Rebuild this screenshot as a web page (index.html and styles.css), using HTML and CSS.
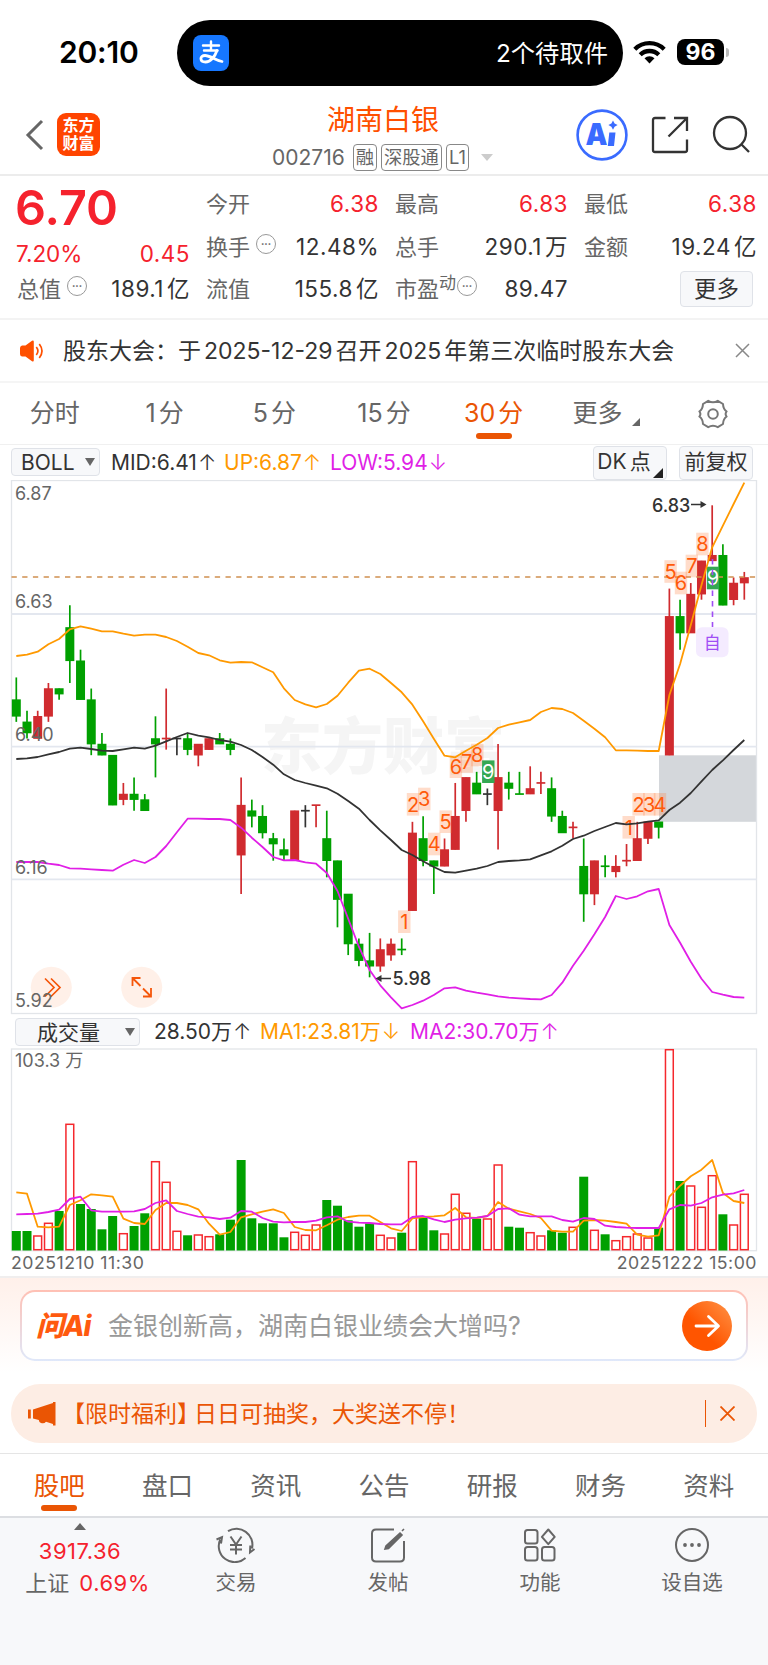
FILE: index.html
```html
<!DOCTYPE html>
<html lang="zh-CN">
<head>
  <meta charset="UTF-8">
  <meta name="viewport" content="width=device-width, initial-scale=1.0">
  <title>湖南白银 002716</title>
  <link rel="stylesheet" href="styles.css">
</head>
<body>

<div class="status-bar">
  <span class="clock">20:10</span>
  <div class="island">
    <svg class="alipay" width="36" height="36" viewBox="0 0 36 36">
      <rect width="36" height="36" rx="8" fill="#1677ff"/>
      <g fill="none" stroke="#fff" stroke-width="2.4" stroke-linecap="round">
        <path d="M10 10.5h16M18 6.500v9M11 15.500h13.500"/>
        <path d="M24 15.500c-2 6-6.500 11.500-11.500 11.500-6 0-6-6.500-.5-6.500 5 0 10 4.500 17 6" stroke-width="2.800"/>
      </g>
    </svg>
    <span>2个待取件</span>
  </div>
  <svg class="wifi" width="33" height="24" viewBox="0 0 33 24">
    <g fill="none" stroke="#000" stroke-width="4.300">
      <path d="M1.800 9.200a21 21 0 0 1 29.400 0"/>
      <path d="M7.200 14.800a13.300 13.300 0 0 1 18.600 0"/>
    </g>
    <path d="M16.500 23.500l-5-5.300a7.300 7.300 0 0 1 10 0z"/>
  </svg>
  <span class="battery">96</span>
  <span class="battery-tip"></span>
</div>

<header class="header">
  <svg class="back" width="20" height="32" viewBox="0 0 20 32"><path d="M17 2L3 16l14 14" fill="none" stroke="#666" stroke-width="3"/></svg>
  <div class="logo">东方<br>财富</div>
  <div class="title">
    <h1>湖南白银</h1>
    <div class="code">002716 <i>融</i><i>深股通</i><i>L1</i><b></b></div>
  </div>
  <svg class="ai" width="52" height="52" viewBox="0 0 52 52">
    <circle cx="26" cy="26" r="24.400" fill="#fff" stroke="#3a6bff" stroke-width="2.600"/>
    <text x="9.500" y="36" textLength="22" lengthAdjust="spacingAndGlyphs">A</text>
    <path d="M33.300 23.500h6.200l-1.500 13.500h-6.200zM37 11.500l1.600 3 3 1.600-3 1.600-1.600 3-1.600-3-3-1.600 3-1.600z" fill="#3a6bff"/>
  </svg>
  <svg class="share" width="38" height="38" viewBox="0 0 38 38">
    <path d="M14.500 2H4Q2 2 2 4v30q0 2 2 2h30q2 0 2-2V23.500M23 2h13v13M36 2L17.500 20.500" fill="none" stroke="#333" stroke-width="2.300"/>
  </svg>
  <svg class="search" width="38" height="38" viewBox="0 0 38 38">
    <g fill="none" stroke="#333" stroke-width="2.300"><circle cx="18" cy="18" r="16"/><path d="M29 29l8 8"/></g>
  </svg>
</header>

<section class="quote">
  <div class="col first">
    <div class="price">6.70</div>
    <div class="row change"><em>7.20%</em><em>0.45</em></div>
    <div class="row"><span>总值<u>•••</u></span><strong>189.1<s></s>亿</strong></div>
  </div>
  <div class="col">
    <div class="row"><span>今开</span><em>6.38</em></div>
    <div class="row"><span>换手<u>•••</u></span><strong>12.48%</strong></div>
    <div class="row"><span>流值</span><strong>155.8<s></s>亿</strong></div>
  </div>
  <div class="col">
    <div class="row"><span>最高</span><em>6.83</em></div>
    <div class="row"><span>总手</span><strong>290.1<s></s>万</strong></div>
    <div class="row"><span>市盈<sup>动</sup><u>•••</u></span><strong>89.47</strong></div>
  </div>
  <div class="col">
    <div class="row"><span>最低</span><em>6.38</em></div>
    <div class="row"><span>金额</span><strong>19.24<s></s>亿</strong></div>
    <div class="row end"><button class="more">更多</button></div>
  </div>
</section>

<div class="notice">
  <svg width="24" height="22" viewBox="0 0 24 22">
    <path d="M0 8q0-2 2-2.500h3.500L12 .8q1.800-.8 1.800 1v18.400q0 1.800-1.800 1L5.500 16.500H2q-2-.5-2-2.500z" fill="#ff5000"/>
    <path d="M16.300 7q3.200 4 0 8M19.300 4q5.400 7 0 14" fill="none" stroke="#ff5000" stroke-width="1.700"/>
  </svg>
  <p>股东大会：于<s></s>2025-12-29<s></s>召开<s></s>2025<s></s>年第三次临时股东大会</p>
  <svg width="15" height="15" viewBox="0 0 15 15"><path d="M1 1l13 13M14 1L1 14" stroke="#888" stroke-width="1.500"/></svg>
</div>

<nav class="periods">
  <a>分时</a>
  <a>1<s></s>分</a>
  <a>5<s></s>分</a>
  <a>15<s></s>分</a>
  <a class="active">30<s></s>分</a>
  <a class="has-more">更多</a>
  <a class="gear">
    <svg width="30" height="30" viewBox="0 0 30 30" fill="none" stroke="#777" stroke-width="2" stroke-linejoin="round">
      <path d="M10.200 1.800q4.800 3 9.600 0L25 5q.2 5 3.600 7.500-2 2.500 0 5Q25.200 20 25 25l-5.200 3.200q-4.800-3-9.600 0L5 25q-.2-5-3.600-7.500 2-2.500 0-5Q4.800 10 5 5z"/>
      <circle cx="15" cy="15" r="4.800"/>
    </svg>
  </a>
</nav>

<div class="indicator">
  <button class="select boll">BOLL<b></b></button>
  <span class="mid">MID:6.41<i>↑</i></span>
  <span class="up">UP:6.87<i>↑</i></span>
  <span class="low">LOW:5.94<i>↓</i></span>
  <button class="dk">DK<s></s>点<b></b></button>
  <button class="adj">前复权</button>
</div>

<svg id="kline" width="768" height="535" viewBox="0 480 768 535"></svg>

<div class="indicator volume-bar">
  <button class="select vol">成交量<b></b></button>
  <span class="mid">28.50万<i>↑</i></span>
  <span class="up">MA1:23.81万<i>↓</i></span>
  <span class="low">MA2:30.70万<i>↑</i></span>
</div>

<svg id="volume" width="768" height="204" viewBox="0 1048 768 204"></svg>

<div class="dates"><span>20251210 11:30</span><span>20251222 15:00</span></div>

<section class="ask">
  <div class="ask-box">
    <span class="ask-logo">问Ai</span>
    <span class="ask-text">金银创新高，湖南白银业绩会大增吗?</span>
    <svg width="50" height="50" viewBox="0 0 50 50">
      <defs><linearGradient id="go" x1="1" y1="0" x2="0" y2="1"><stop offset=".1" stop-color="#ff8a3c"/><stop offset=".6" stop-color="#ff5500"/></linearGradient></defs>
      <circle cx="25" cy="25" r="25" fill="url(#go)"/>
      <path d="M14 25h22M26.500 15.500L36.500 25l-10 9.500" fill="none" stroke="#fff" stroke-width="2.800" stroke-linecap="round" stroke-linejoin="round"/>
    </svg>
  </div>
</section>

<div class="banner">
  <svg width="28" height="24" viewBox="0 0 28 24" fill="#ea5504"><path d="M0 7.500h2.800v9H0zM5 7.500L25 1V0h2.500v23.500H25V22l-7-2.300q-2 2.500-5 1.200-2-.6-2.200-3L5 16.500z"/></svg>
  <p>【限时福利<i>】</i>日日可抽奖，大奖送不停！</p>
  <svg class="close" width="15" height="15" viewBox="0 0 15 15"><path d="M.5.5l14 14M14.500.5l-14 14" stroke="#ea5504" stroke-width="1.800"/></svg>
</div>

<nav class="sections">
  <a class="active">股吧</a>
  <a>盘口</a>
  <a>资讯</a>
  <a>公告</a>
  <a>研报</a>
  <a>财务</a>
  <a>资料</a>
</nav>

<footer class="toolbar">
  <div class="index">
    <b></b>
    <em>3917.36</em>
    <div>上证 <em>0.69%</em></div>
  </div>
  <div class="tool">
    <svg width="42" height="36" viewBox="0 0 42 36" fill="none" stroke="#666" stroke-width="2">
      <path d="M13 4.200A16 16 0 0 1 37 21.500M39.500 22l-4.500 3.500.3-7M30.500 31A16 16 0 0 1 5.200 12.500M1.500 12.500l5.500-2.300-1 6.300"/>
      <path d="M15.500 9.500l5.500 8 5.500-8M21 17.500v10M15 18h12M15 22.500h12"/>
    </svg>
    <span>交易</span>
  </div>
  <div class="tool">
    <svg width="36" height="36" viewBox="0 0 36 36" fill="none" stroke="#666" stroke-width="2">
      <path d="M24 2.500H6Q2 2.500 2 6.500v24q0 4 4 4h24q4 0 4-4V14"/>
      <path d="M15 22l1-3L30 6l2 2-13.500 13.500zM32 4l2-2" fill="#666" stroke-width="1.600"/>
    </svg>
    <span>发帖</span>
  </div>
  <div class="tool">
    <svg width="36" height="36" viewBox="0 0 36 36" fill="none" stroke="#666" stroke-width="2">
      <rect x="3" y="3" width="12.500" height="13.500" rx="2.500"/>
      <rect x="3" y="20" width="12.500" height="13.500" rx="2.500"/>
      <rect x="20" y="20" width="12.500" height="13.500" rx="2.500"/>
      <path d="M26.300 2.500l6.400 7.300-6.400 7.300-6.400-7.300z" stroke-linejoin="round"/>
    </svg>
    <span>功能</span>
  </div>
  <div class="tool">
    <svg width="36" height="36" viewBox="0 0 36 36" fill="none" stroke="#666" stroke-width="2">
      <circle cx="18" cy="18" r="16"/>
      <g fill="#666" stroke="none"><circle cx="11" cy="18" r="1.900"/><circle cx="18" cy="18" r="1.900"/><circle cx="25" cy="18" r="1.900"/></g>
    </svg>
    <span>设自选</span>
  </div>
</footer>

<script src="chart.js"></script>
</body>
</html>
```
FILE: styles.css
```css
* {
  box-sizing: border-box;
}
body {
  margin: 0;
  width: 768px;
  height: 1665px;
  background: #fff;
  color: #333;
  font-family: Inter, "Noto Sans CJK SC", sans-serif;
  overflow: hidden;
}
i, em, u, s {
  font-style: normal;
  text-decoration: none;
}
s {
  display: inline-block;
  width: 3px;
}
p, h1 {
  margin: 0;
  font-weight: 400;
}
svg {
  display: block;
  flex: none;
}
button {
  font-family: inherit;
  color: #333;
  padding: 0;
  background: #f7f8fa;
  border: 1.500px solid #dfe2e8;
  border-radius: 4px;
}

/* status bar */
.status-bar {
  height: 90px;
  padding-top: 20px;
  display: flex;
}
.clock {
  width: 177px;
  padding-left: 59px;
  font-size: 30px;
  font-weight: 600;
  line-height: 65px;
  letter-spacing: -0.200px;
  color: #000;
}
.island {
  width: 446px;
  height: 66px;
  padding: 0 15px 0 16px;
  border-radius: 33px;
  background: #000;
  color: #fff;
  display: flex;
  align-items: center;
  justify-content: space-between;
  font-size: 24.300px;
}
.island span {
  padding-bottom: 3px;
}
.wifi {
  margin: 20px 0 0 10px;
}
.battery {
  width: 47px;
  height: 26px;
  margin: 19px 2px 0 11px;
  border-radius: 8px;
  background: #000;
  color: #fff;
  font-size: 23px;
  font-weight: 700;
  line-height: 26px;
  text-align: center;
}
.battery-tip {
  width: 3px;
  height: 9px;
  margin-top: 28px;
  border-radius: 0 4px 4px 0;
  background: #bbb;
}

/* header */
.header {
  height: 86px;
  padding-left: 25px;
  border-bottom: 2px solid #ececec;
  display: flex;
}
.back {
  margin-top: 29px;
}
.logo {
  width: 43px;
  height: 43px;
  margin: 23px 0 0 12px;
  padding-top: 3px;
  border-radius: 9px;
  background: #ff4400;
  color: #fff;
  font-size: 16px;
  font-weight: 700;
  line-height: 18px;
  text-align: center;
}
.title {
  width: 476px;
  padding-top: 12px;
  padding-left: 93px;
  text-align: center;
}
.title h1 {
  padding-right: 3px;
  font-size: 28px;
  line-height: 37px;
  color: #ff5000;
}
.code {
  display: flex;
  margin-top: 5px;
  padding-left: 79px;
  font-size: 21px;
  line-height: 28px;
  color: #666;
}
.code i {
  margin-left: 4px;
  padding: 0 2px;
  height: 27px;
  border: 1.500px solid #888;
  border-radius: 4px;
  font-size: 18.300px;
  line-height: 24px;
}
.code i:first-of-type {
  margin-left: 8px;
}
.code b {
  margin: 10px 0 0 12px;
  border: 6px solid transparent;
  border-top: 7px solid #ccc;
  border-bottom: 0;
  height: 7px;
}
.ai {
  margin-top: 19px;
}
.ai text {
  font-size: 30px;
  font-weight: 900;
  fill: #3a6bff;
}
.share {
  margin: 26px 0 0 23px;
}
.search {
  margin: 25px 0 0 23px;
}

/* quote */
.quote {
  height: 144px;
  padding: 7px 12px 0 17px;
  border-bottom: 2px solid #f3f3f3;
  display: grid;
  grid-template-columns: repeat(4, 172px);
  column-gap: 17px;
}
.row {
  height: 42.500px;
  display: flex;
  justify-content: space-between;
  font-size: 22.500px;
  line-height: 42px;
  white-space: nowrap;
}
.row span {
  font-size: 22px;
  color: #666;
}
.row strong, .row em {
  margin-right: -1px;
  font-weight: 400;
  letter-spacing: 0.500px;
}
.change em:first-child {
  margin-left: -1px;
  letter-spacing: 0;
}
.quote em, .price {
  color: #f5222d;
}
.price {
  height: 49px;
  margin-left: -2px;
  font-size: 48.500px;
  font-weight: 600;
  line-height: 49px;
}
.change {
  height: 36px;
  padding-top: 1px;
}
.row u {
  display: inline-block;
  width: 20px;
  height: 20px;
  margin-left: 6px;
  border: 1.500px solid #999;
  border-radius: 50%;
  font-size: 6px;
  line-height: 17px;
  text-align: center;
  vertical-align: 9px;
}
.row sup {
  font-size: 17px;
  line-height: 1;
  vertical-align: 8px;
}
.row sup + u {
  margin-left: 1px;
}
.row.end {
  justify-content: flex-end;
}
.more {
  width: 73px;
  height: 36px;
  margin: 3px 3px 0 0;
  font-size: 22.500px;
  line-height: 32px;
}

/* notice */
.notice {
  height: 63px;
  padding: 0 18px 0 20px;
  border-bottom: 2px solid #f5f5f5;
  display: flex;
  align-items: center;
}
.notice p {
  flex: 1;
  padding-left: 19px;
  font-size: 23px;
  line-height: 40px;
  white-space: nowrap;
}

/* periods */
.periods {
  height: 62px;
  border-bottom: 1px solid #f0f0f0;
  display: grid;
  grid-template-columns: repeat(7, 1fr);
  text-align: center;
  font-size: 25px;
  line-height: 61px;
  color: #666;
}
.active {
  position: relative;
  color: #ea5504;
}
.active::after {
  content: "";
  position: absolute;
  left: 50%;
  bottom: 5px;
  width: 36px;
  height: 6px;
  margin-left: -18px;
  border-radius: 3px;
  background: #ea5504;
}
.has-more {
  position: relative;
  padding-right: 12px;
}
.has-more::after, .dk b {
  content: "";
  position: absolute;
  right: 18px;
  top: 35px;
  border-left: 8px solid transparent;
  border-bottom: 8px solid #666;
}
.gear svg {
  margin: 16px auto 0;
}

/* indicator bars */
.indicator {
  height: 35px;
  padding: 3px 0 0 11px;
  display: flex;
  font-size: 21px;
  line-height: 30px;
  white-space: nowrap;
}
.indicator i {
  display: inline-block;
  margin-left: 1px;
  font-size: 22px;
  font-weight: 300;
  line-height: 1;
}
.indicator button {
  font-size: 21px;
}
.select {
  height: 28px;
  display: flex;
  align-items: center;
  line-height: 25px;
}
.select b {
  border: 5px solid transparent;
  border-top: 8px solid #666;
  border-bottom: 0;
}
.boll {
  width: 89px;
  padding-left: 9px;
  gap: 10px;
}
.mid {
  width: 113px;
  margin-left: 11px;
}
.up {
  width: 106px;
  color: #ff9900;
}
.low {
  width: 263px;
  color: #e01fe6;
}
.indicator .dk, .indicator .adj {
  width: 74px;
  height: 34px;
  margin-top: -2px;
  line-height: 26px;
  padding-bottom: 3px;
}
.indicator .dk {
  position: relative;
  padding-right: 12px;
}
.indicator .dk b {
  right: 3px;
  top: 21px;
  border-left-width: 10px;
  border-bottom: 10px solid #222;
}
.indicator .adj {
  margin-left: 12px;
}
.volume-bar {
  height: 33px;
  padding: 3px 0 0 15px;
}
.vol {
  width: 125px;
  padding-left: 21px;
  gap: 25px;
}
.volume-bar .mid, .volume-bar .up, .volume-bar .low {
  line-height: 28px;
}
.volume-bar .mid {
  width: 106px;
  margin-left: 14px;
}
.volume-bar .up {
  width: 150px;
}

/* charts */
#kline text, #volume text {
  font-size: 18px;
  fill: #666;
}
#kline .watermark {
  font-size: 61px;
  font-weight: 900;
  fill: #f5f5f5;
}
#kline .mark {
  font-size: 20px;
  fill: #ff5a0a;
  text-anchor: middle;
}
#kline .mark.done {
  fill: #fff;
}
#kline .peak {
  font-size: 18px;
  font-weight: 500;
  fill: #333;
}
#kline .own {
  font-size: 17px;
  fill: #a04df5;
  text-anchor: middle;
}
.dates {
  height: 24px;
  padding: 0 11px;
  display: flex;
  justify-content: space-between;
  font-size: 17.700px;
  line-height: 22px;
  letter-spacing: 0.500px;
  color: #666;
}

/* ask box */
.ask {
  height: 108px;
  padding: 12px 20px 0;
  border-top: 2px solid #f0eeee;
  background: linear-gradient(#fff0ea, #fff 95px);
}
.ask-box {
  height: 71px;
  padding: 0 14px;
  border: 2px solid transparent;
  border-radius: 15px;
  background: linear-gradient(#fff, #fff) padding-box, linear-gradient(#ffc0b4, #dfe8fa) border-box;
  display: flex;
  align-items: center;
}
.ask-logo {
  width: 72px;
  padding-bottom: 3px;
  font-size: 28px;
  font-weight: 800;
  font-style: italic;
  letter-spacing: -1px;
  color: #ff5a0f;
}
.ask-text {
  flex: 1;
  padding-bottom: 3px;
  font-size: 25px;
  color: #999;
}

/* banner */
.banner {
  width: 746px;
  height: 59px;
  margin: 0 0 10px 11px;
  padding: 0 22px 0 17px;
  border-radius: 29px;
  background: #fdede4;
  color: #ea5504;
  display: flex;
  align-items: center;
}
.banner p {
  flex: 1;
  padding-left: 6px;
  font-size: 23px;
  line-height: 40px;
}
.banner i {
  margin-right: -6px;
}
.banner .close {
  width: 30px;
  height: 27px;
  padding: 6px 0 6px 14px;
  border-left: 1.500px solid #ea5504;
}

/* section tabs */
.sections {
  height: 65px;
  padding: 0 5px;
  border-top: 1px solid #e5e5e5;
  border-bottom: 2px solid #dcdee2;
  display: grid;
  grid-template-columns: repeat(7, 1fr);
  text-align: center;
  font-size: 25.500px;
  line-height: 64px;
  height: 65px;
  color: #666;
}
.sections a {
  height: 62px;
}

/* bottom toolbar */
.toolbar {
  height: 149px;
  padding-top: 5px;
  background: #f7f8fa;
  color: #666;
  display: grid;
  grid-template-columns: 160px repeat(4, 152px);
}
.index {
  text-align: center;
  font-size: 22px;
  line-height: 32px;
}
.index > b {
  display: block;
  width: 12px;
  margin: 0 auto 5px;
  border: 6px solid transparent;
  border-top: 0;
  border-bottom: 7px solid #666;
}
.index em {
  letter-spacing: 0.500px;
  color: #f5222d;
}
.index div {
  padding-left: 15px;
}
.index div em {
  margin-left: 4px;
}
.tool {
  padding-top: 4px;
  font-size: 20.500px;
  line-height: 38px;
  text-align: center;
}
.tool svg {
  margin: 0 auto 1px;
}
```
FILE: chart.js
```js
const STEP = 10.706;
const x = i => 16.3 + i * STEP;
const RED = '#d02b2f';
const GREEN = '#00a000';
const BLACK = '#333';

// [color, high, body top, body bottom, low] in cents
const candles = [
  ['g',652,648,645,644],['g',646,644,642,641],['r',646,645,641,641],['r',651,650,645,644],['g',650,650,649,648],
  ['g',665,661,655,651],['g',657,655,648,648],['g',650,648,640,638],['g',642,640,638,638],['g',638,638,629,629],
  ['r',633,631,630,629],['g',634,631,630,628],['g',631,630,628,628],['g',645,641,640,634],['r',650,641,641,639],
  ['k',641,641,641,638],['g',642,641,639,638],['r',640,640,638,636],['r',641,641,639,639],['g',642,641,640,640],
  ['g',641,640,639,638],['r',634,629,620,613],['g',630,628,627,625],['g',629,627,624,623],['g',624,623,622,619],
  ['g',623,621,620,619],['r',628,628,619,619],['k',629,628,628,625],['r',629,629,629,625],['g',628,623,619,616],
  ['g',619,619,612,607],['g',613,613,604,602],['g',605,604,601,600],['g',606,601,600,598],['r',605,603,600,599],
  ['r',605,604,602,601],['g',605,603,603,602],['r',626,624,610,610],['g',627,623,619,618],['g',619,619,618,613],
  ['r',623,621,618,618],['r',633,627,621,621],['r',634,634,628,626],['g',635,633,631,631],['k',632,631,631,629],
  ['r',640,634,628,621],['g',635,633,632,630],['g',635,631,631,631],['r',636,632,631,631],['r',635,633,633,631],
  ['g',634,632,627,626],['g',628,627,624,624],['r',626,625,625,623],['g',623,618,613,608],['r',619,619,613,611],
  ['g',620,618,618,616],['r',620,618,617,616],['r',622,619,619,618],['r',626,623,619,619],['r',626,626,623,622],
  ['g',626,626,625,623],['r',668,663,638,638],['g',666,663,660,657],['r',669,667,660,660],['r',673,673,667,666],
  ['r',683,674,673,673],['g',676,674,665,665],['r',670,669,666,665],['r',671,670,669,666]
];

const up = [656,654.7,651.7,644.3,639,629.3,626.3,628.7,631.3,631.3,633.7,635.7,634.7,634.7,637,641,646.7,653,655.3,660.3,662.7,662,662.3,667.3,672.3,688.3,700,704.3,707.3,704,695.7,682.7,670.7,668.7,674,683,692.3,704.7,721.3,738.7,755.7,757.3,750.7,744.7,738,728,724.7,722.3,720,712,708,709,713,720.7,728.7,737.3,750.3,750.3,750.7,751,751,695,664,625,585,547.3,525.7,504,482.7];
const mid = [759,758.3,757,754.3,752,748.7,747.7,749,750.7,751,749.3,747.7,748.7,745.7,741.3,737,733,735.7,737.3,740,741.7,745,750,757,764.7,774.3,780,783,785.7,788.3,793.7,801,808.7,820,830.3,840,850,855,861.3,867,872,872.7,870.7,868.7,866,862,861,860.3,859.3,855.3,851.3,845.7,839,835.7,831,827,823,824.3,823.3,821.7,820.3,810,802.7,793,781.3,770,760.3,750,740];
const low = [862,862,862,863.7,865,868.3,868.7,869.3,870,870.7,864.7,860,863,857,846,832.3,818.7,818.7,819,819,820,827.7,837.7,847,857,860.3,860,862.3,863.7,873,891,918.7,946.7,970,985.3,997.3,1008.3,1005,1000.7,995,988.3,987.3,990.7,992.7,994.3,996.3,997.7,998.3,999,999.3,995,982.7,965.7,950.7,934.3,917,896,899,896.3,891.3,889,925,942.7,961.7,978.7,992,994.7,997,997.7];

const line = (x1, y1, x2, y2, color, w = 1.5, extra = '') =>
  `<line x1="${x1}" y1="${y1}" x2="${x2}" y2="${y2}" stroke="${color}" stroke-width="${w}" ${extra}/>`;
const curve = (ys, color) =>
  `<polyline points="${ys.map((y, i) => x(i).toFixed(1) + ',' + y).join(' ')}" fill="none" stroke="${color}" stroke-width="1.8" stroke-linejoin="round"/>`;

function drawKline() {
  const y = p => 505.3 + (683 - p) * 5.553;
  let s = '<text class="watermark" x="261" y="769">东方财富</text>';
  s += '<rect x="659" y="755.3" width="97.500" height="66.500" fill="#d4d7db"/>';
  s += '<rect x="11.500" y="480.500" width="745" height="533" fill="none" stroke="#e2e5e9" stroke-width="1.300"/>';
  [614, 746.7, 879.3].forEach(g => { s += line(11.5, g, 756.5, g, '#e3e7ef', 1.8); });

  candles.forEach(([c, h, t, b, l], i) => {
    const color = { r: RED, g: GREEN, k: BLACK }[c];
    s += line(x(i), y(h), x(i), y(l), color, 1.7);
    if (t === b) {
      s += line(x(i) - 4.4, y(t), x(i) + 4.4, y(t), color, 1.7);
    } else {
      s += `<rect x="${x(i) - 4.5}" y="${y(t) - 0.3}" width="9" height="${y(b) - y(t) + 0.6}" fill="${color}"/>`;
    }
  });

  s += line(11.5, 577, 756.5, 577, '#cf9050', 1.7, 'stroke-dasharray="5.300 5.400"');

  const marks = [
    [1,404.3,921.7],[2,413,804.3],[3,424.3,799],[4,434.3,844],[5,445.7,821.7],[6,455.9,766.7],[7,466.7,761.5],[8,477.3,755],[9,488.3,771.7],
    [1,628.7,827.3],[2,638.6,804.3],[3,649.3,804.3],[4,660,804.3],[5,670.6,571.5],[6,681,583],[7,691.8,566],[8,702.4,544],[9,713,578]
  ];
  marks.forEach(([n, mx, my]) => {
    s += `<rect x="${mx - 6.2}" y="${my - 11.3}" width="12.400" height="22.600" fill="${n === 9 ? '#34a853' : 'rgba(255,120,50,.26)'}"/>`;
    s += `<text class="mark${n === 9 ? ' done' : ''}" x="${mx}" y="${my + 7.3}">${n}</text>`;
  });

  s += curve(up, '#ff9900') + curve(mid, '#333') + curve(low, '#e01fe6');

  s += line(712.5, 559, 712.5, 627, '#a04df5', 1.6, 'stroke-dasharray="5.500 5"');
  s += '<rect x="696" y="627.300" width="32.500" height="30" rx="6" fill="#f4ebff"/><text class="own" x="712.300" y="649">自</text>';

  s += '<text class="peak" x="652" y="511.500">6.83</text>' + line(691, 504.5, 703, 504.5, '#333') + '<path d="M706.500 504.500l-6-3.500v7z" fill="#333"/>';
  s += '<text class="peak" x="392.500" y="985">5.98</text>' + line(379, 978.5, 391, 978.5, '#333') + '<path d="M375.500 978.500l6-3.500v7z" fill="#333"/>';

  s += '<circle cx="51.300" cy="987.300" r="20.500" fill="#fff0e8"/><path d="M45 978.500l9 9-9 9M51 978.500l9 9-9 9" fill="none" stroke="#f5560a" stroke-width="1.700"/>';
  s += '<circle cx="141.700" cy="987.300" r="20.500" fill="#fff0e8"/><path d="M132.500 986v-8h8M132.500 978l8 8M151 988v8.500h-8M151 996.500l-8-8" fill="none" stroke="#f5560a" stroke-width="1.800"/>';

  [['6.87', 500], ['6.63', 608.3], ['6.40', 741.3], ['6.16', 874], ['5.92', 1007.3]].forEach(([t, ty]) => {
    s += `<text x="15" y="${ty}">${t}</text>`;
  });
  document.getElementById('kline').innerHTML = s;
}

// bar heights, drawn up from the base line
const volumes = [19,19,14,26.7,39,125.7,46,41,20.7,34,16.3,24,36.7,88.3,67.7,18.7,14.7,15,13.3,15.7,30.3,90,31.7,26.7,26.7,12.7,17.7,14.7,25,50,44.3,29.7,23.3,26.7,14.7,12,17.3,88.3,32.3,19.7,16,55.7,36.7,31.3,31,85,23.3,22.3,17.3,14,19.7,17.3,22.7,73.3,19.7,15.7,9.3,13.3,16,12,22.3,200.3,69,64,42.7,74.3,35.7,25,55.7];
const volColors = 'ggrrgrgggg' + 'rggrrrgrrg' + 'ggggggrrrg' + 'ggggrrgrgg' + 'rrrgrrggrr' + 'ggrgrgrrrr' + 'grgrrrgrr';
const ma1 = [547,551,650,652,650,585,571,553,556,560,626,639,642,600,579,579,585,598,641,674,666,622,613,605,598,609,651,660,661,646,629,621,617,617,636,655,663,625,621,619,616,594,622,624,618,576,596,604,612,624,662,665,665,632,630,632,636,641,674,680,676,560,527,499,479,450,549,573,579];
const ma2 = [613,612,611,606,599,567,560,601,605,605,605,604,597,579,571,603,612,620,622,627,623,603,605,624,635,637,636,636,632,622,619,635,638,639,642,643,643,621,618,628,636,629,625,623,618,597,595,614,619,619,619,630,635,624,627,647,651,653,654,654,654,598,585,587,579,562,554,550,540];

function drawVolume() {
  const base = 1250;
  const toY = v => (1010 + v / 3).toFixed(1);
  let s = '<rect x="11.500" y="1049" width="745" height="201.700" fill="none" stroke="#e2e5e9" stroke-width="1.300"/>';
  volumes.forEach((h, i) => {
    s += volColors[i] === 'r'
      ? `<rect x="${x(i) - 3.9}" y="${base - h}" width="7.800" height="${h - 0.3}" fill="#fff" stroke="#f5282d" stroke-width="1.500"/>`
      : `<rect x="${x(i) - 4.5}" y="${base - h}" width="9" height="${h + 0.5}" fill="${GREEN}"/>`;
  });
  s += curve(ma1.map(toY), '#ff9900') + curve(ma2.map(toY), '#e01fe6');
  s += '<text x="15" y="1067">103.3 万</text>';
  document.getElementById('volume').innerHTML = s;
}

drawKline();
drawVolume();
```
